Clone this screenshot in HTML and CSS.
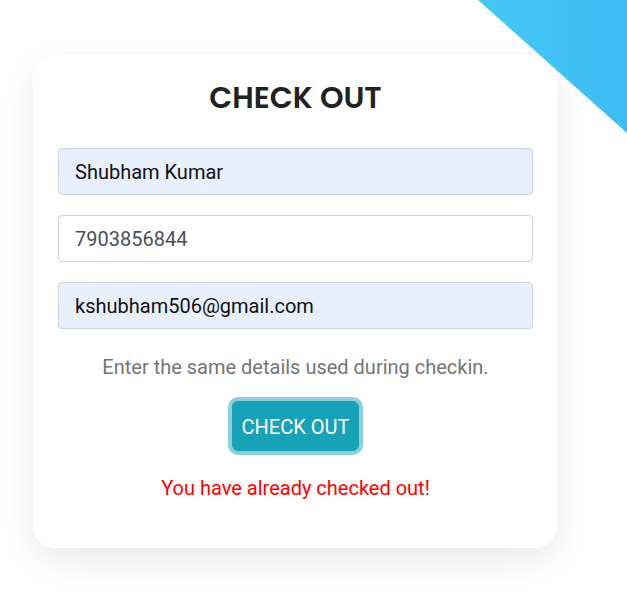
FILE: index.html
```html
<!DOCTYPE html>
<html lang="en">
<head>
<meta charset="utf-8">
<title>Check Out</title>
<link rel="stylesheet" href="styles.css">
</head>
<body>
<div class="corner"></div>
<main class="page">
  <form class="card">
    <h1 class="title">CHECK OUT</h1>
    <input class="field autofill" type="text" value="Shubham Kumar">
    <input class="field" type="text" value="7903856844">
    <input class="field autofill" type="email" value="kshubham506@gmail.com">
    <p class="hint">Enter the same details used during checkin.</p>
    <div class="actions"><button type="button" class="btn">CHECK OUT</button></div>
    <p class="error">You have already checked out!</p>
  </form>
</main>
</body>
</html>
```
FILE: styles.css
```css
* { box-sizing: border-box; }
html, body { margin: 0; padding: 0; background: #fff; }
body { font-family: Roboto, "Liberation Sans", sans-serif; width: 627px; height: 600px; overflow: hidden; position: relative; }
.corner {
  position: absolute; top: 0; right: 0; width: 149px; height: 133px;
  background: linear-gradient(90deg, #45c8f6, #3cbcf3);
  clip-path: polygon(0 0, 100% 0, 100% 100%);
  z-index: 2;
}
.page { padding: 55px 0 0 33px; }
.card {
  width: 524px; height: 493px; background: #fff; border-radius: 22px;
  box-shadow: 0 12px 40px rgba(0,0,0,0.09);
  padding: 23px 24px 0 25px;
  display: flex; flex-direction: column; align-items: stretch;
}
.title {
  margin: 0 0 30px; text-align: center; font-family: Poppins, "Open Sans", sans-serif;
  font-weight: 600; font-size: 30px; line-height: 40px; color: #222; letter-spacing: 0;
}
.field {
  display: block; width: 475px; height: 47px; margin: 0 0 20px;
  border: 1px solid #ced4da; border-radius: 4px; background: #fff;
  padding: 0 16px; font-family: Roboto, sans-serif; font-size: 20px; color: #495057;
  outline: none;
}
.field.autofill { background: #e8f0fe; color: #111; }
.hint { margin: 4px 0 0; text-align: center; color: #757575; font-size: 20px; line-height: 28px; }
.actions { display: flex; justify-content: center; margin-top: 20px; }
.btn {
  width: 127px; height: 50px; border: 1px solid #17a2b8; border-radius: 6px;
  background: #17a2b8; color: #fff; font-family: Roboto, sans-serif; font-size: 20px;
  box-shadow: 0 0 0 4px rgba(23,162,184,0.5); padding: 1px 0 0;
}
.error { margin: 23px 0 0; text-align: center; color: #ff0000; font-size: 20px; line-height: 28px; }
```
